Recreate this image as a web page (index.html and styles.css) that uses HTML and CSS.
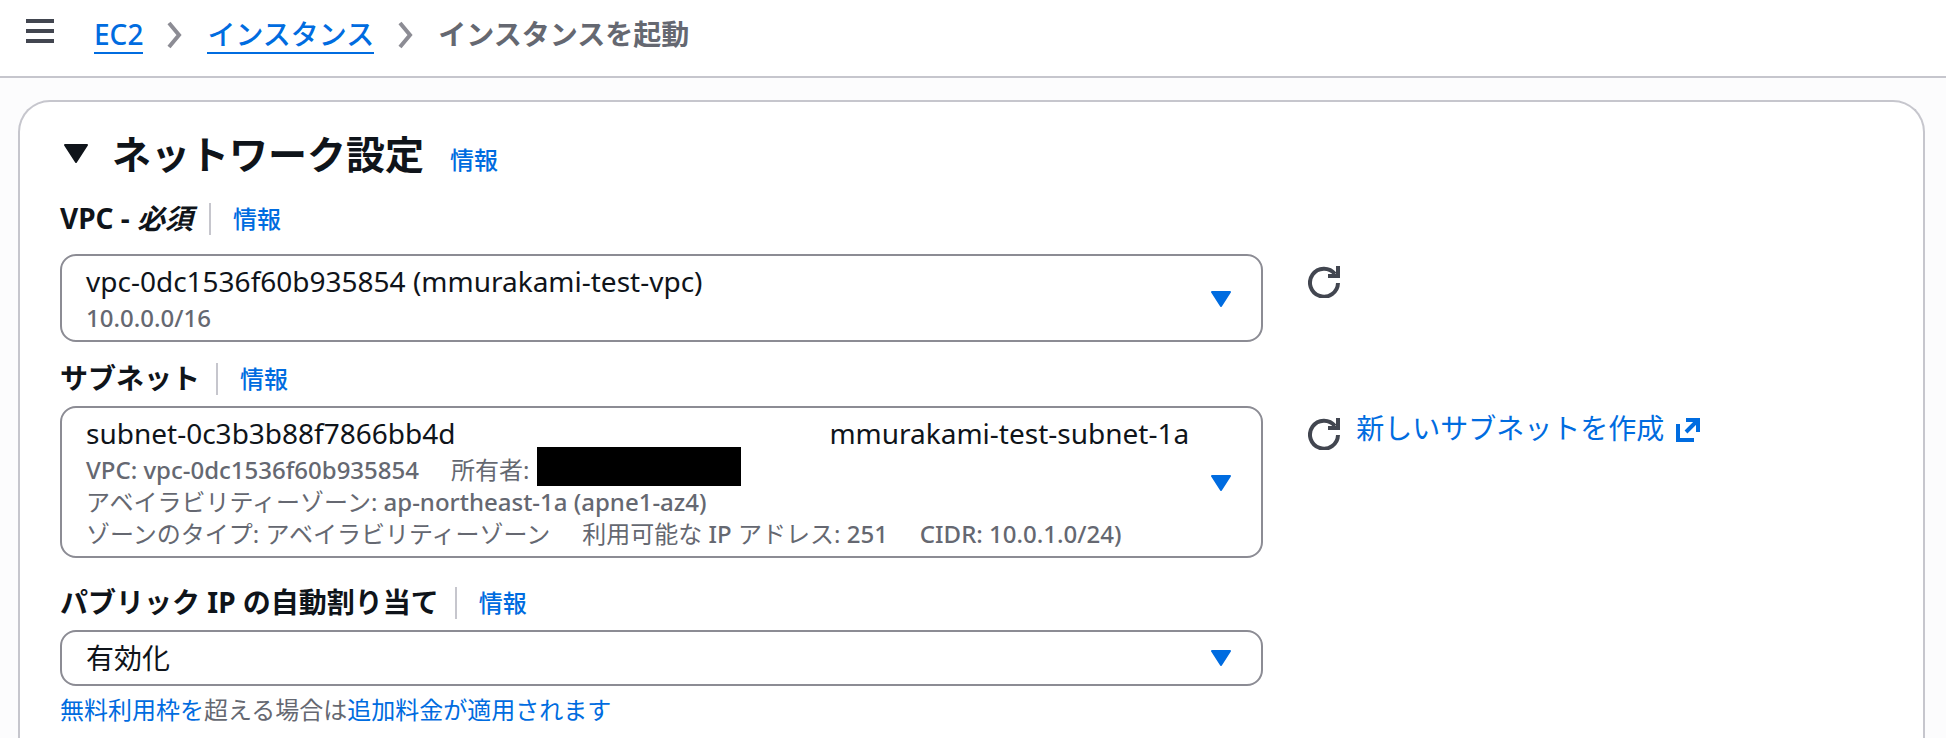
FILE: index.html
```html
<!DOCTYPE html>
<html lang="ja">
<head>
  <meta charset="UTF-8">
  <title>インスタンスを起動 | EC2</title>
  <link rel="stylesheet" href="styles.css">
</head>
<body>

  <header class="topbar">
    <button class="icon-btn menu-btn" type="button" aria-label="メニュー">
      <svg width="28" height="24" viewBox="0 0 28 24"><path d="M0 2h28M0 12h28M0 22h28" stroke="currentColor" stroke-width="4"/></svg>
    </button>
    <nav class="breadcrumb">
      <a href="#">EC2</a>
      <svg class="chevron" width="16" height="28" viewBox="0 0 16 28"><path d="M2 2l10 12L2 26" fill="none" stroke="currentColor" stroke-width="4"/></svg>
      <a href="#">インスタンス</a>
      <svg class="chevron" width="16" height="28" viewBox="0 0 16 28"><path d="M2 2l10 12L2 26" fill="none" stroke="currentColor" stroke-width="4"/></svg>
      <span class="current">インスタンスを起動</span>
    </nav>
  </header>

  <main class="content">
    <section class="card">

      <div class="card-title">
        <button class="icon-btn" type="button" aria-label="折りたたむ">
          <svg width="28" height="20" viewBox="0 0 28 20"><path d="M3 1h22l-11 17z" fill="currentColor" stroke="currentColor" stroke-width="2" stroke-linejoin="round"/></svg>
        </button>
        <h2>ネットワーク設定</h2>
        <a class="info" href="#">情報</a>
      </div>

      <div class="field field-vpc">
        <div class="field-label">
          <label for="vpc">VPC - <i>必須</i></label>
          <a class="info" href="#">情報</a>
        </div>
        <div class="field-row">
          <button class="dropdown" id="vpc" type="button" aria-haspopup="listbox">
            <span class="option">
              <span class="option-name">vpc-0dc1536f60b935854 (mmurakami-test-vpc)</span>
              <span class="option-line"><span class="latin">10.0.0.0/16</span></span>
            </span>
            <svg class="caret" width="20" height="16" viewBox="0 0 20 16"><path d="M1 1h18l-9 14z"/></svg>
          </button>
          <div class="actions">
            <button class="icon-btn refresh" type="button" aria-label="更新">
              <svg width="32" height="32" viewBox="0 0 32 32"><path d="M30 17A14 14 0 1 1 27 8M30 0v10H20" fill="none" stroke="currentColor" stroke-width="4"/></svg>
            </button>
          </div>
        </div>
      </div>

      <div class="field">
        <div class="field-label">
          <label for="subnet">サブネット</label>
          <a class="info" href="#">情報</a>
        </div>
        <div class="field-row">
          <button class="dropdown" id="subnet" type="button" aria-haspopup="listbox">
            <span class="option">
              <span class="option-name"><span>subnet-0c3b3b88f7866bb4d</span><span>mmurakami-test-subnet-1a</span></span>
              <span class="option-line"><span class="latin">VPC: vpc-0dc1536f60b935854</span><span class="owner">所有者: <span class="masked"></span></span></span>
              <span class="option-line"><span>アベイラビリティーゾーン: <span class="latin">ap-northeast-1a (apne1-az4)</span></span></span>
              <span class="option-line"><span>ゾーンのタイプ: アベイラビリティーゾーン</span><span>利用可能な <span class="latin">IP</span> アドレス: <span class="latin">251</span></span><span class="latin">CIDR: 10.0.1.0/24)</span></span>
            </span>
            <svg class="caret" width="20" height="16" viewBox="0 0 20 16"><path d="M1 1h18l-9 14z"/></svg>
          </button>
          <div class="actions">
            <button class="icon-btn refresh" type="button" aria-label="更新">
              <svg width="32" height="32" viewBox="0 0 32 32"><path d="M30 17A14 14 0 1 1 27 8M30 0v10H20" fill="none" stroke="currentColor" stroke-width="4"/></svg>
            </button>
            <a class="create-link" href="#">新しいサブネットを作成
              <svg width="24" height="24" viewBox="0 0 24 24"><path d="M2 6v16h16M10 2h12v12M21 3L10 14" fill="none" stroke="currentColor" stroke-width="4"/></svg>
            </a>
          </div>
        </div>
      </div>

      <div class="field field-ip">
        <div class="field-label">
          <label for="public-ip">パブリック IP の自動割り当て</label>
          <a class="info" href="#">情報</a>
        </div>
        <div class="field-row">
          <div class="select-wrap">
            <select id="public-ip">
              <option>有効化</option>
              <option>無効化</option>
            </select>
            <svg class="caret" width="20" height="16" viewBox="0 0 20 16"><path d="M1 1h18l-9 14z"/></svg>
          </div>
        </div>
        <p class="hint"><a href="#">無料利用枠を</a>超える場合は<a href="#">追加料金が適用されます</a></p>
      </div>

    </section>
  </main>

</body>
</html>
```
FILE: styles.css
```css
* {
  box-sizing: border-box;
}

body {
  margin: 0;
  min-height: 100vh;
  display: flex;
  flex-direction: column;
  background: #fcfcfd;
  color: #0f141a;
  font-family: "Noto Sans", "Noto Sans CJK JP", sans-serif;
  font-size: 28px;
  line-height: 36px;
}

a {
  color: #006ce0;
  text-decoration: none;
}

svg {
  display: block;
  flex: none;
}

.icon-btn {
  padding: 0;
  border: none;
  background: none;
  color: inherit;
  cursor: pointer;
}

/* top bar */
.topbar {
  display: flex;
  align-items: flex-start;
  gap: 40px;
  padding: 16px 26px 22px;
  background: #fff;
  border-bottom: 2px solid #c6c6cd;
}

.menu-btn {
  padding-top: 3px;
  color: #424650;
}

.breadcrumb {
  display: flex;
  align-items: center;
  gap: 24px;
}

.breadcrumb a {
  border-bottom: 2px solid #006ce0;
  font-weight: 500;
}

.breadcrumb .current {
  padding-bottom: 2px;
  color: #656871;
  font-weight: 700;
}

.chevron {
  color: #8c8c94;
}

/* card */
.content {
  flex: 1;
  display: flex;
  padding: 22px 21px 0 18px;
}

.card {
  flex: 1;
  min-width: 0;
  padding: 24px 40px 0;
  background: #fff;
  border: 2px solid #c6c6cd;
  border-bottom: none;
  border-radius: 32px 32px 0 0;
}

.card-title {
  display: flex;
  align-items: baseline;
}

.card-title .icon-btn {
  align-self: center;
  padding-left: 2px;
}

.card-title h2 {
  margin: 0 26px 0 22px;
  font-size: 39px;
  line-height: 56px;
  font-weight: 700;
}

.info {
  font-size: 24px;
  line-height: 32px;
  font-weight: 500;
}

/* fields */
.field {
  margin-top: 21px;
}

.field-ip {
  margin-top: 29px;
}

.field-label {
  display: flex;
  margin-bottom: 11px;
  line-height: 32px;
}

.field-vpc .field-label {
  margin-bottom: 19px;
}

.field-label label {
  padding-right: 16px;
  border-right: 2px solid #c6c6cd;
  font-weight: 700;
  line-height: 30px;
}

.field-label .info {
  margin-left: 22px;
}

.field-row {
  display: grid;
  grid-template-columns: 66% 1fr;
  gap: 39px;
}

.dropdown,
.select-wrap select {
  width: 100%;
  border: 2px solid #8c8c94;
  border-radius: 16px;
  background: #fff;
  color: inherit;
  font: inherit;
  cursor: pointer;
}

.dropdown {
  display: flex;
  align-items: center;
  gap: 22px;
  padding: 7px 30px 6px 24px;
  text-align: left;
}

.option {
  flex: 1;
}

.option-name {
  display: flex;
  justify-content: space-between;
  margin-bottom: 3px;
}

.option-line {
  display: flex;
  gap: 32px;
  color: #656871;
  font-size: 24px;
  line-height: 32px;
}

.latin {
  font-weight: 500;
}

.owner {
  display: flex;
  align-items: center;
  gap: 8px;
}

.masked {
  width: 204px;
  height: 39px;
  margin: -7px 0 0;
  background: #000;
}

.caret {
  fill: #006ce0;
  stroke: #006ce0;
  stroke-width: 2;
  stroke-linejoin: round;
}

.select-wrap {
  position: relative;
}

.select-wrap select {
  display: block;
  height: 56px;
  padding: 0 72px 0 24px;
  appearance: none;
}

.select-wrap .caret {
  position: absolute;
  top: 20px;
  right: 32px;
  pointer-events: none;
}

.actions {
  display: flex;
  align-items: flex-start;
  gap: 10px;
  padding-top: 6px;
}

.refresh {
  padding: 6px;
  color: #424650;
}

.create-link {
  display: flex;
  gap: 12px;
  line-height: 32px;
}

.create-link svg {
  margin-top: 6px;
}

.hint {
  margin: 8px 0 0;
  color: #656871;
  font-size: 24px;
  line-height: 32px;
}
```
